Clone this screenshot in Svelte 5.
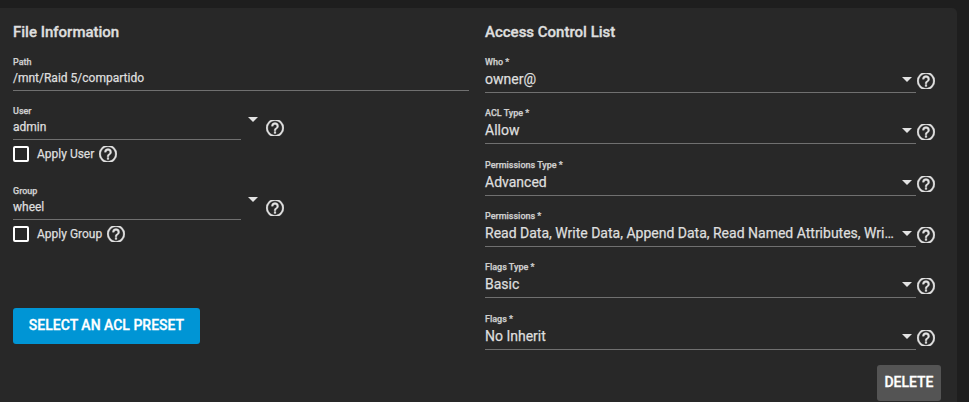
<script>
  const owners = [
    { label: 'User', value: 'admin', apply: 'Apply User' },
    { label: 'Group', value: 'wheel', apply: 'Apply Group' }
  ];
  const entries = [
    { label: 'Who *', value: 'owner@', height: 51 },
    { label: 'ACL Type *', value: 'Allow', height: 52 },
    { label: 'Permissions Type *', value: 'Advanced', height: 51 },
    { label: 'Permissions *', value: 'Read Data, Write Data, Append Data, Read Named Attributes, Wri…', height: 51 },
    { label: 'Flags Type *', value: 'Basic', height: 52 },
    { label: 'Flags *', value: 'No Inherit', height: 52 }
  ];
</script>

{#snippet help()}
  <svg class="help" viewBox="2 3.1 20 17.8" aria-label="Help">
    <path d="M11 18h2v-2h-2v2zM12 2a10 10 0 1 0 0 20 10 10 0 0 0 0-20zm0 18c-4.41 0-8-3.59-8-8s3.59-8 8-8 8 3.59 8 8-3.59 8-8 8zm0-14a4 4 0 0 0-4 4h2a2 2 0 1 1 4 0c0 2-3 1.750-3 5h2c0-2.250 3-2.500 3-5a4 4 0 0 0-4-4z" />
  </svg>
{/snippet}

<main class="page">
  <div class="card">
    <section class="column info">
      <h2>File Information</h2>
      <div class="field path">
        <span class="label">Path</span>
        <span class="value">/mnt/Raid 5/compartido</span>
      </div>
      {#each owners as owner}
        <div class="owner">
          <div class="row">
            <div class="field">
              <span class="label">{owner.label}</span>
              <span class="value">{owner.value}</span>
            </div>
            <span class="arrow"></span>
            {@render help()}
          </div>
          <div class="apply">
            <span class="box"></span>
            <span class="apply-text">{owner.apply}</span>
            {@render help()}
          </div>
        </div>
      {/each}
      <button class="preset">SELECT AN ACL PRESET</button>
    </section>

    <section class="column acl">
      <h2>Access Control List</h2>
      {#each entries as entry}
        <div class="entry" style:height="{entry.height}px">
          <div class="select">
            <span class="label">{entry.label}</span>
            <div class="line">
              <span class="value">{entry.value}</span>
              <span class="arrow"></span>
            </div>
          </div>
          {@render help()}
        </div>
      {/each}
      <button class="delete">DELETE</button>
    </section>
  </div>
</main>

<style>
  :global(body) { margin: 0; background: #1e1e1e; }
  .page {
    box-sizing: border-box;
    width: 969px;
    height: 402px;
    padding-top: 8px;
    overflow: hidden;
    background: #1e1e1e;
    color: #dedede;
    font-family: Roboto, sans-serif;
    -webkit-text-stroke: 0.25px currentColor;
  }
  .card {
    box-sizing: border-box;
    display: flex;
    gap: 16px;
    width: 957px;
    height: 410px;
    padding: 14px 16px 0 13px;
    border-radius: 0 5px 0 0;
    background: #282828;
  }
  .column { width: 456px; display: flex; flex-direction: column; }
  h2 {
    margin: 0;
    height: 33px;
    font-size: 15px;
    line-height: 20px;
    font-weight: 500;
    flex: none;
    -webkit-text-stroke-width: 0.35px;
  }
  .label {
    display: block;
    height: 13px;
    font-size: 9px;
    line-height: 14px;
    font-weight: 500;
    white-space: pre;
    color: #d0d0d0;
  }
  .value { display: block; white-space: nowrap; }
  .field {
    box-sizing: border-box;
    height: 36px;
    border-bottom: 1px solid #707070;
  }
  .field .value { font-size: 12px; line-height: 20px; }
  .path { margin-bottom: 13px; }
  .owner { height: 80px; }
  .row { display: flex; height: 36px; }
  .row .field { width: 228px; }
  .row .arrow { margin: 13px 8px 0 7px; }
  .row .help { margin-top: 16px; }
  .apply { display: flex; align-items: center; height: 16px; margin-top: 6px; }
  .box {
    box-sizing: border-box;
    width: 16px;
    height: 16px;
    border: 2px solid #fff;
    border-radius: 2px;
    margin-right: 8px;
  }
  .apply-text { font-size: 12px; line-height: 16px; margin-right: 5px; }
  .help {
    display: block;
    width: 18px;
    height: 16px;
    flex: none;
    fill: #e2e2e2;
    stroke: #e2e2e2;
    stroke-width: 0.35;
  }
  .arrow {
    width: 0;
    height: 0;
    flex: none;
    border: 5px solid transparent;
    border-top-color: #e2e2e2;
    border-bottom: 0;
  }
  button {
    box-sizing: border-box;
    padding: 0 0 2px;
    border: 0;
    border-radius: 3px;
    height: 36px;
    flex: none;
    font: 500 14px/34px Roboto, sans-serif;
    color: #fff;
    -webkit-text-stroke: 0.3px #fff;
  }
  .preset { width: 187px; margin-top: 44px; background: #0095d5; }
  .entry { display: flex; flex: none; }
  .select {
    box-sizing: border-box;
    width: 431px;
    height: 38px;
    border-bottom: 1px solid #707070;
  }
  .line { display: flex; justify-content: space-between; padding-right: 4px; }
  .line .value {
    font-size: 14px;
    line-height: 22px;
  }
  .line .arrow { margin-top: 9px; }
  .entry .help { margin: 18px 0 0 1px; }
  .delete { width: 64px; align-self: flex-end; background: #545454; margin-top: 1px; }
</style>
